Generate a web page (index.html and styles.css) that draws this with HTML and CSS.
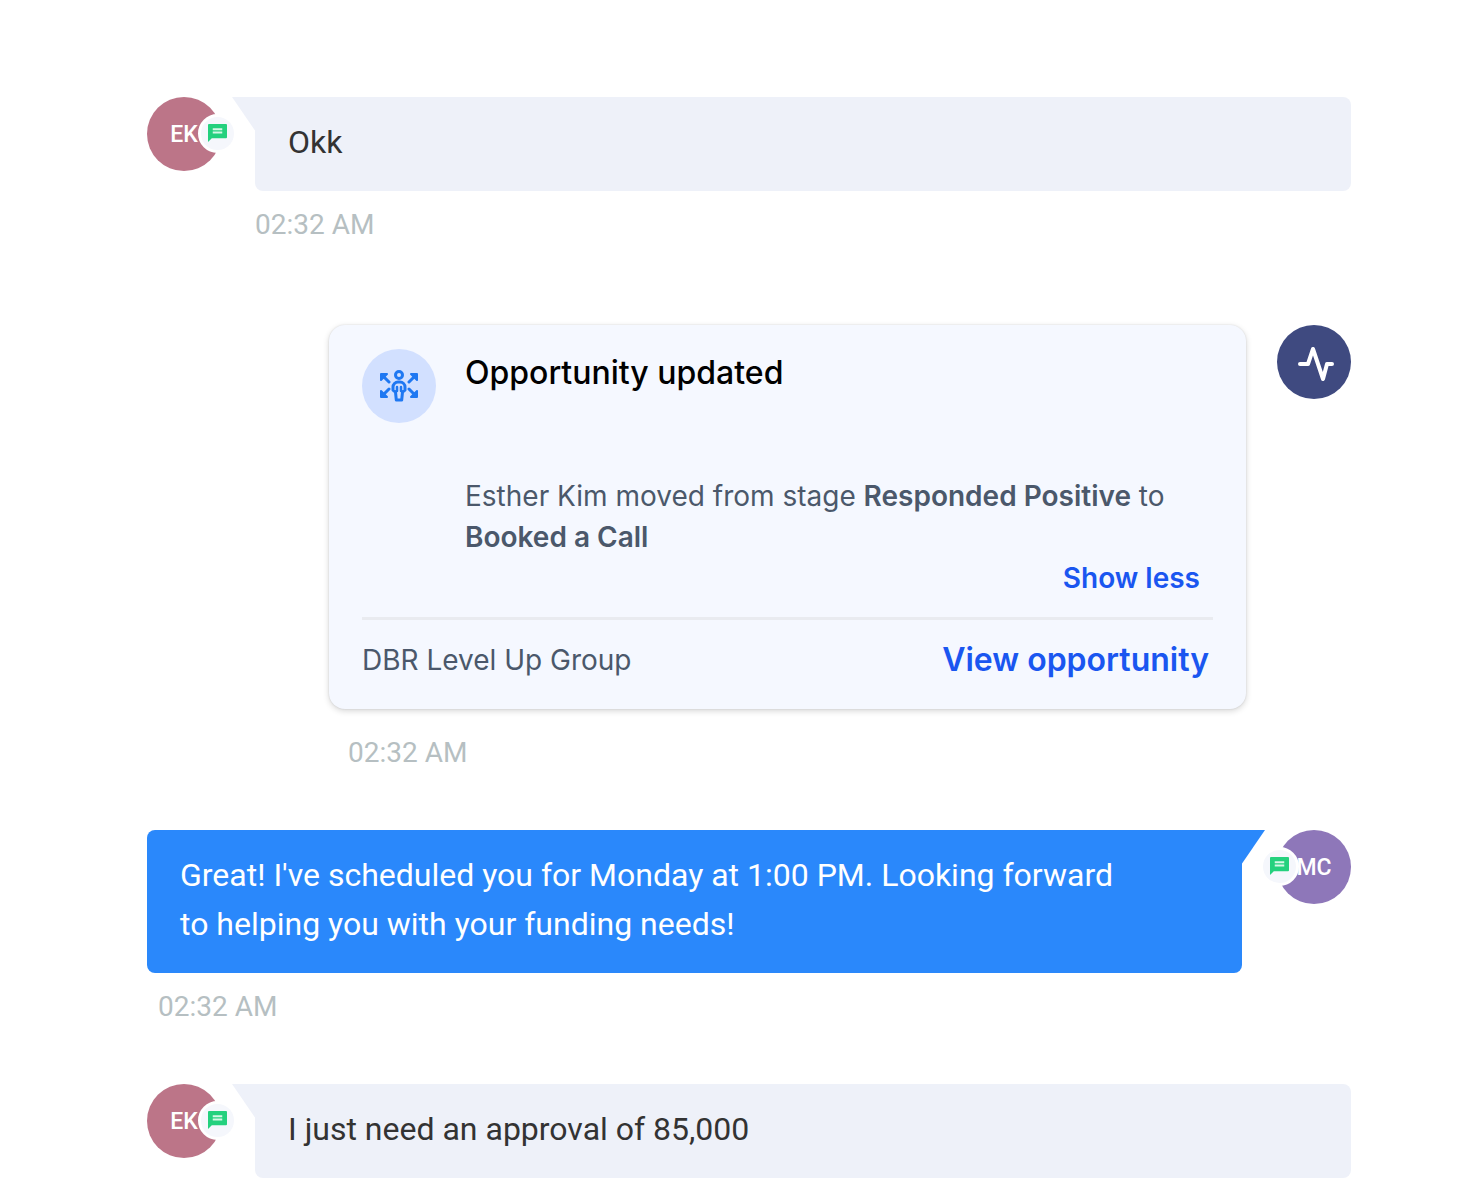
FILE: index.html
```html
<!DOCTYPE html>
<html lang="en">
<head>
    <meta charset="UTF-8">
    <meta name="viewport" content="width=device-width, initial-scale=1.0">
    <title>Conversation</title>
    <link rel="stylesheet" href="styles.css">
</head>
<body>
    <svg class="sprite" aria-hidden="true">
        <symbol id="sms" viewBox="0 0 20 20">
            <path fill="#24d17e" d="M1 0h18a1 1 0 0 1 1 1v13a1 1 0 0 1-1 1H4l-4 4V1a1 1 0 0 1 1-1z"/>
            <path stroke="#d5f7e6" stroke-width="2" d="M5 5.500h10M5 9h10"/>
        </symbol>
    </svg>

    <main class="chat">
        <div class="message incoming">
            <div class="avatar pink">EK
                <span class="badge"><svg><use href="#sms"/></svg></span>
            </div>
            <div class="content">
                <p class="bubble">Okk</p>
                <time class="time">02:32 AM</time>
            </div>
        </div>

        <div class="message activity">
            <div class="content">
                <article class="card">
                    <div class="card-body">
                        <div class="card-icon">
                            <svg viewBox="0 0 38 32" fill="none" stroke="#1f78f2" stroke-width="3" stroke-linejoin="round" stroke-linecap="round">
                                <circle cx="19" cy="5" r="3.5"/>
                                <path d="M18 12h2a5 5 0 0 1 5 5v3l-2.500 2-.8 8h-5.400l-.8-8-2.500-2v-3a5 5 0 0 1 5-5z"/>
                                <path stroke-width="2.500" d="M17 17v4M21 17v4"/>
                                <path stroke-width="3" d="M2 5l7 7M36 5l-7 7M2 26l7-7M36 26l-7-7"/>
                                <path fill="#1f78f2" stroke-width="2" d="M1 10V4h6zM37 10V4h-6zM1 21v6h6zM37 21v6h-6z"/>
                            </svg>
                        </div>
                        <div class="card-text">
                            <h2>Opportunity updated</h2>
                            <p>Esther Kim moved from stage <strong>Responded Positive</strong> to <strong>Booked a Call</strong></p>
                            <button class="show-less" type="button">Show less</button>
                        </div>
                    </div>
                    <footer class="card-footer">
                        <span>DBR Level Up Group</span>
                        <a href="#">View opportunity</a>
                    </footer>
                </article>
                <time class="time">02:32 AM</time>
            </div>
            <div class="avatar navy">
                <svg class="pulse" viewBox="0 0 74 74" fill="none" stroke="#fff" stroke-width="4" stroke-linecap="round" stroke-linejoin="round">
                    <path d="M23 39h8l5-15 10 30 4-15h5"/>
                </svg>
            </div>
        </div>

        <div class="message outgoing">
            <div class="content">
                <p class="bubble">Great! I've scheduled you for Monday at 1:00 PM. Looking forward to helping you with your funding needs!</p>
                <time class="time">02:32 AM</time>
            </div>
            <div class="avatar purple">MC
                <span class="badge"><svg><use href="#sms"/></svg></span>
            </div>
        </div>

        <div class="message incoming">
            <div class="avatar pink">EK
                <span class="badge"><svg><use href="#sms"/></svg></span>
            </div>
            <div class="content">
                <p class="bubble">I just need an approval of 85,000</p>
            </div>
        </div>
    </main>
</body>
</html>
```
FILE: styles.css
```css
* {
    box-sizing: border-box;
}
body {
    margin: 0;
    background-color: #fff;
    font-family: Roboto, sans-serif;
    color: #333;
}
h2, p {
    margin: 0;
}
.sprite {
    display: none;
}
.chat {
    display: flex;
    flex-direction: column;
    gap: 60px;
    padding: 97px 115px 0 147px;
}
.message {
    display: flex;
    align-items: flex-start;
    gap: 34px;
}
.content {
    flex: 1;
    min-width: 0;
}

/* avatars */
.avatar {
    position: relative;
    display: flex;
    flex-shrink: 0;
    justify-content: center;
    align-items: center;
    width: 74px;
    height: 74px;
    border-radius: 50%;
    font-size: 23px;
    font-weight: 500;
    color: #fff;
}
.pink {
    background-color: #bc7588;
}
.navy {
    background-color: #3f4a80;
}
.purple {
    background-color: #8e77b9;
}
.badge {
    position: absolute;
    top: 17px;
    right: -16px;
    display: flex;
    justify-content: center;
    align-items: center;
    width: 39px;
    height: 39px;
    border: 3px solid #fff;
    border-radius: 50%;
    background-color: #f5f7fc;
}
.badge svg {
    width: 19px;
    height: 19px;
}
.outgoing .badge {
    right: auto;
    left: -17px;
}
.pulse {
    width: 74px;
    height: 74px;
}

/* bubbles */
.bubble {
    position: relative;
    padding: 21px 33px 24px;
    border-radius: 8px;
    font-size: 32px;
    line-height: 49px;
}
.bubble::before {
    content: "";
    position: absolute;
    top: 0;
    width: 24px;
    height: 35px;
    background-color: inherit;
}
.incoming .bubble {
    border-top-left-radius: 0;
    background-color: #eef1f9;
}
.incoming .bubble::before {
    right: 100%;
    margin-right: -1px;
    clip-path: polygon(0 0, 100% 0, 100% 100%);
}
.outgoing {
    gap: 35px;
}
.outgoing .bubble {
    padding-right: 96px;
    border-top-right-radius: 0;
    background-color: #2a88fb;
    color: #fff;
}
.outgoing .bubble::before {
    left: 100%;
    margin-left: -1px;
    clip-path: polygon(0 0, 100% 0, 0 100%);
}
.time {
    display: block;
    margin-top: 17px;
    font-size: 28px;
    line-height: 34px;
    color: #b6bfc2;
}
.outgoing .time {
    padding-left: 11px;
}

/* opportunity card */
.activity {
    gap: 31px;
    margin-top: 23px;
    padding-left: 182px;
}
.activity .time {
    margin-top: 27px;
    padding-left: 19px;
}
.card {
    padding: 24px 33px;
    border-radius: 16px;
    background-color: #f5f8ff;
    box-shadow: 0 2px 6px rgba(0, 0, 0, 0.16), 0 0 2px rgba(0, 0, 0, 0.12);
    font-family: Inter, sans-serif;
    font-size: 28px;
    color: #4b586b;
}
.card-body {
    display: flex;
    gap: 29px;
    padding-bottom: 18px;
    border-bottom: 3px solid #e9ebf0;
}
.card-icon {
    display: flex;
    flex-shrink: 0;
    justify-content: center;
    align-items: center;
    width: 74px;
    height: 74px;
    border-radius: 50%;
    background-color: #d2e0ff;
}
.card-icon svg {
    width: 38px;
    height: 32px;
}
.card-text {
    display: flex;
    flex: 1;
    flex-direction: column;
    line-height: 41px;
}
.card h2 {
    margin-bottom: 79px;
    font-size: 32px;
    font-weight: 500;
    line-height: 48px;
    color: #000;
}
.card strong {
    font-weight: 600;
}
.show-less {
    align-self: flex-end;
    padding: 0 13px;
    border: none;
    background: none;
    font: inherit;
    font-weight: 600;
    color: #1a56f0;
    cursor: pointer;
}
.card-footer {
    display: flex;
    justify-content: space-between;
    padding: 16px 4px 1px 0;
    line-height: 48px;
}
.card-footer a {
    font-size: 32px;
    font-weight: 600;
    color: #1a56f0;
    text-decoration: none;
}
```
